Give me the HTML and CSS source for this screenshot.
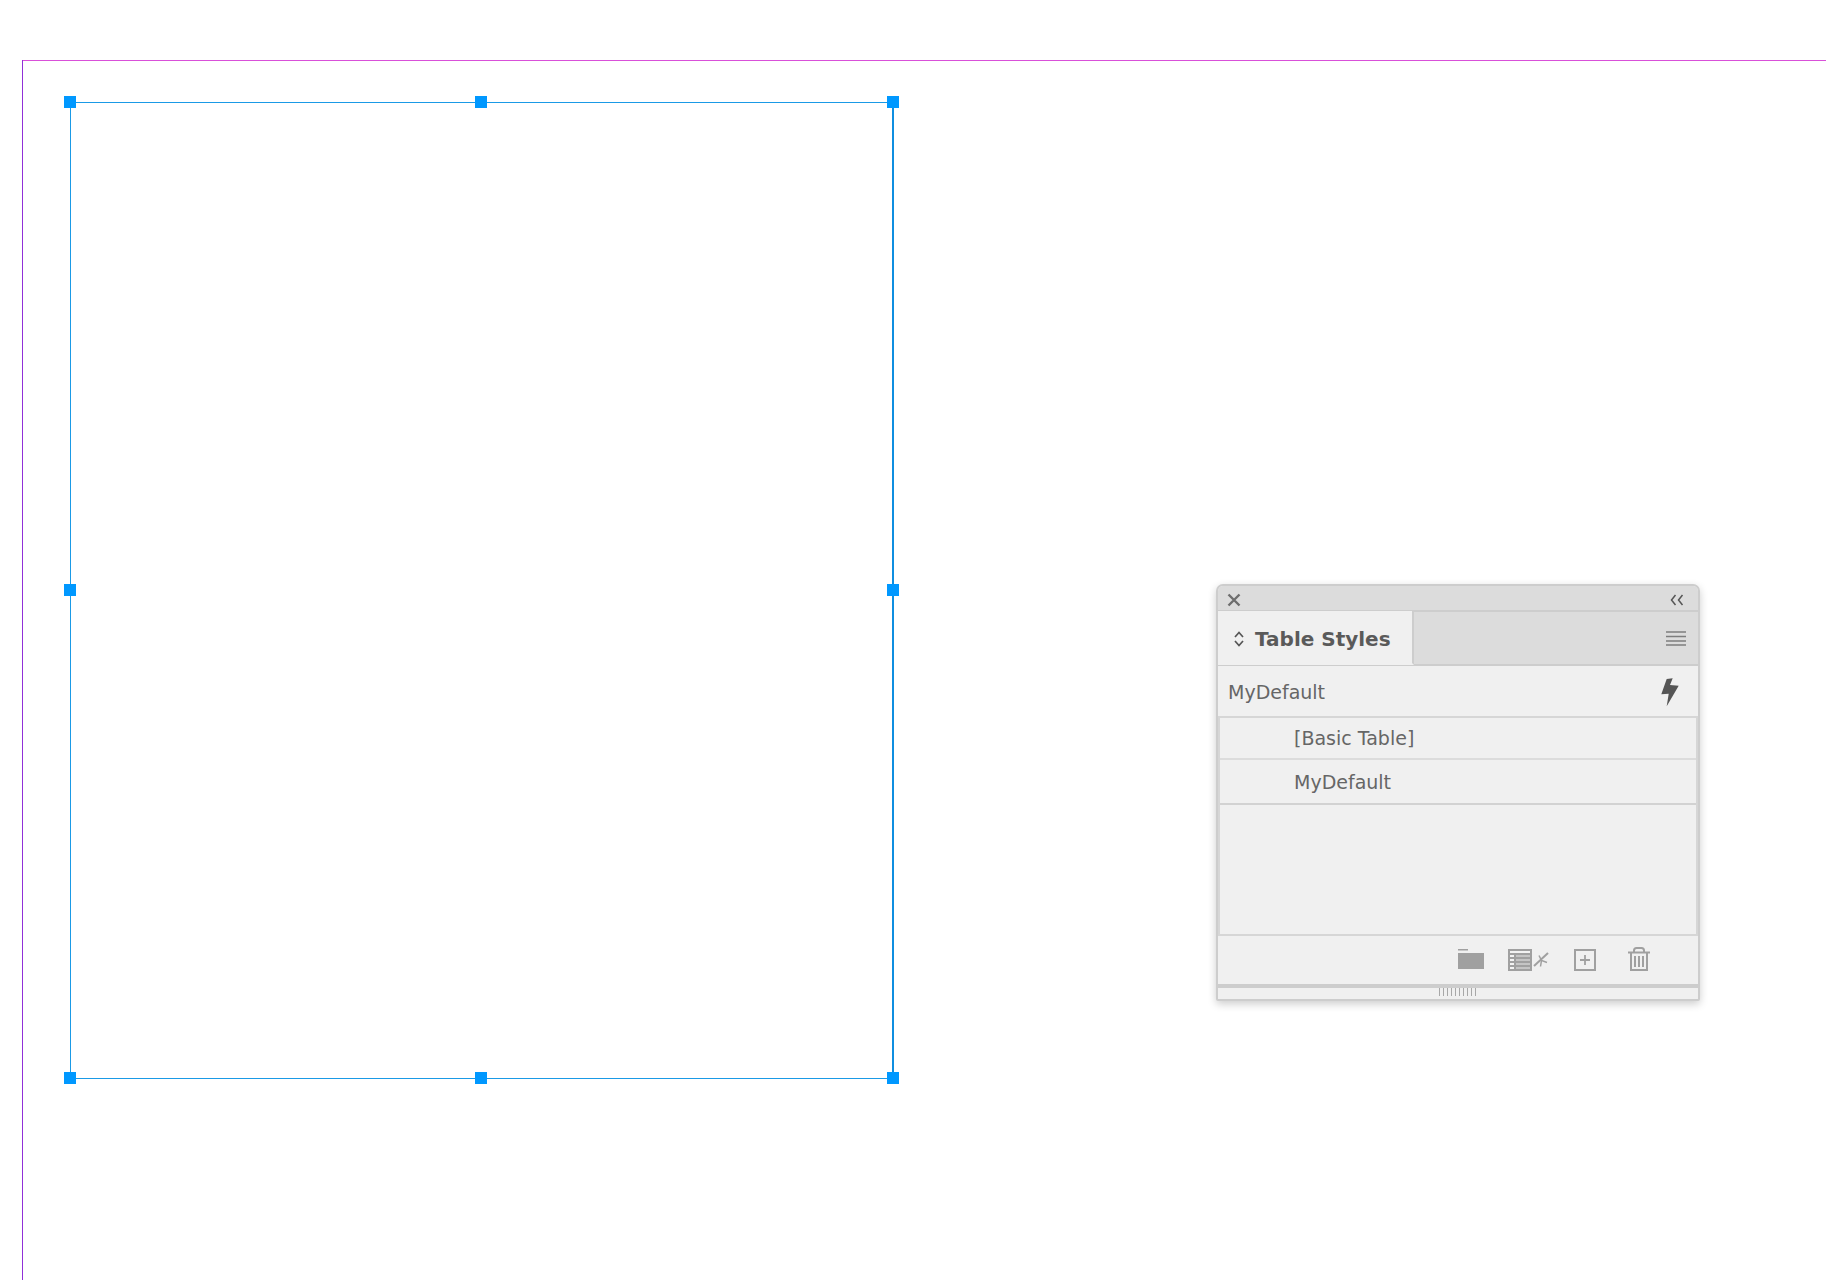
FILE: index.html
```html
<!DOCTYPE html>
<html lang="en">
<head>
<meta charset="utf-8">
<title>Table Styles</title>
<link rel="stylesheet" href="styles.css">
</head>
<body>
<main class="canvas">
  <div class="margin margin-top"></div>
  <div class="margin margin-left"></div>

  <div class="frame">
    <span class="handle h-tl"></span><span class="handle h-tc"></span><span class="handle h-tr"></span>
    <span class="handle h-ml"></span><span class="handle h-mr"></span>
    <span class="handle h-bl"></span><span class="handle h-bc"></span><span class="handle h-br"></span>
  </div>

  <section class="panel">
    <header class="titlebar">
      <svg class="icon-close" width="14" height="14" viewBox="0 0 14 14"><path d="M1.500 1.500l11 11M12.500 1.500l-11 11" fill="none" stroke="#6e6e6e" stroke-width="2.400"/></svg>
      <svg class="icon-collapse" width="14" height="12" viewBox="0 0 14 12"><path d="M5.500 1L1.500 6l4 5M12.500 1L8.500 6l4 5" fill="none" stroke="#555" stroke-width="1.500"/></svg>
    </header>
    <div class="tabbar">
      <div class="tab">
        <svg class="icon-updown" width="10" height="16" viewBox="0 0 10 16"><path d="M1 6l4-4.500L9 6M1 10l4 4.500L9 10" fill="none" stroke="#555" stroke-width="1.700"/></svg>
        <span class="tab-label">Table Styles</span>
      </div>
      <svg class="icon-menu" width="20" height="15" viewBox="0 0 20 15"><path d="M0 1h20M0 5.500h20M0 10h20M0 14h20" stroke="#7d7d7d" stroke-width="1.600"/></svg>
    </div>
    <div class="current">
      <span>MyDefault</span>
      <svg class="icon-bolt" width="18" height="29" viewBox="0 0 18 29"><path d="M5.700 1L11.700.3 9 7l8.700.7L5.700 28.300l2-12.600-7.400.6z" fill="#555"/></svg>
    </div>
    <div class="list">
      <div class="row row-first">[Basic Table]</div>
      <div class="row row-second">MyDefault</div>
    </div>
    <div class="toolbar">
      <svg class="tool tool-folder" width="26" height="20" viewBox="0 0 26 20"><path d="M0 0h10v1.500H0zM0 4h26v16H0z" fill="#a0a0a0"/></svg>
      <svg class="tool tool-table" width="41" height="22" viewBox="0 0 41 22"><path d="M0 0h24v22H0z" fill="#a0a0a0"/><path d="M2 2h20v2H2zM2 6h4v2H2zM2 10h4v2H2zM2 14h4v2H2zM2 18h4v2H2z" fill="#f2f2f2"/><path d="M8 6h14v2H8zM8 10h14v2H8zM8 14h14v2H8zM8 18h14v2H8z" fill="#c4c4c4"/><path d="M26 17L40 4" fill="none" stroke="#a0a0a0" stroke-width="2"/><path d="M31 6.500l2.500 5 5.500 2M33.500 11.500l-1 6" fill="none" stroke="#a0a0a0" stroke-width="1.500"/></svg>
      <svg class="tool tool-new" width="22" height="22" viewBox="0 0 22 22"><path d="M1 1h20v20H1z" fill="none" stroke="#a0a0a0" stroke-width="2"/><path d="M11 6v10M6 11h10" stroke="#a0a0a0" stroke-width="1.800"/></svg>
      <svg class="tool tool-trash" width="22" height="24" viewBox="0 0 22 24"><path d="M0 5.500h22M6 5V3.500Q6 1 8.500 1h5Q16 1 16 3.500V5M3 5.500V23h16V5.500M7 9v11M11 9v11M15 9v11" fill="none" stroke="#a0a0a0" stroke-width="2"/></svg>
    </div>
    <div class="grip">
      <svg width="38" height="8" viewBox="0 0 38 8"><path d="M.5 0v8M4.500 0v8M8.500 0v8M12.500 0v8M16.500 0v8M20.500 0v8M24.500 0v8M28.500 0v8M32.500 0v8M36.500 0v8" stroke="#a8a8a8" stroke-width="1"/></svg>
    </div>
  </section>
</main>
</body>
</html>
```
FILE: styles.css
```css
* { box-sizing: border-box; }
html, body { margin: 0; padding: 0; background: #fff; }
.canvas { position: relative; width: 1826px; height: 1280px; overflow: hidden; background: #fff; }

.margin { position: absolute; }
.margin-top { left: 22px; top: 60px; right: 0; height: 1px; background: #d950d9; }
.margin-left { left: 22px; top: 60px; bottom: 0; width: 1px; background: #9030d8; }

.frame {
  position: absolute; left: 70px; top: 102px; width: 824px; height: 977px;
  border: 1px solid #1a9ae6; border-right-width: 2px; border-right-color: #0f8ee0;
}
.handle { position: absolute; width: 12px; height: 12px; background: #0098ff; }
.h-tl { left: -7px; top: -7px; }
.h-tc { left: 404px; top: -7px; }
.h-tr { left: 816px; top: -7px; }
.h-ml { left: -7px; top: 481px; }
.h-mr { left: 816px; top: 481px; }
.h-bl { left: -7px; top: 969px; }
.h-bc { left: 404px; top: 969px; }
.h-br { left: 816px; top: 969px; }

.panel {
  position: absolute; left: 1216px; top: 584px; width: 484px; height: 417px;
  display: flex; flex-direction: column;
  background: #f0f0f0; border: 2px solid #cdcdcd;
  border-radius: 7px 7px 2px 2px;
  box-shadow: 0 3px 9px rgba(0, 0, 0, .2);
  font-family: "DejaVu Sans", sans-serif; color: #666;
}
.titlebar {
  flex: none; height: 26px; display: flex; align-items: center; justify-content: space-between;
  padding: 3px 14px 0 9px; background: #dcdcdc; border-bottom: 2px solid #cdcdcd;
  border-radius: 5px 5px 0 0;
}
.tabbar {
  flex: none; height: 54px; display: flex; justify-content: space-between; align-items: center;
  padding-right: 12px; background: #dcdcdc; border-bottom: 2px solid #cdcdcd;
}
.tab {
  width: 196px; height: 54px; display: flex; align-items: center; gap: 11px; padding: 4px 0 0 16px;
  background: #f0f0f0; border-right: 2px solid #cdcdcd; border-bottom: 2px solid #f0f0f0;
}
.tab-label { font-size: 20px; font-weight: 700; color: #5a5a5a; white-space: nowrap; }
.current {
  flex: none; height: 50px; display: flex; align-items: center; justify-content: space-between;
  padding: 2px 19px 0 10px; font-size: 19px;
}
.list {
  flex: none; height: 220px; display: flex; flex-direction: column;
  border: 2px solid #d6d6d6; font-size: 19px;
}
.row { display: flex; align-items: center; padding-left: 74px; border-bottom: 2px solid #dcdcdc; }
.row-first { height: 42px; }
.row-second { height: 45px; border-bottom-color: #d2d2d2; }
.toolbar { flex: none; height: 48px; position: relative; }
.tool { position: absolute; }
.tool-folder { left: 240px; top: 13px; }
.tool-table { left: 290px; top: 13px; }
.tool-new { left: 356px; top: 13px; }
.tool-trash { left: 410px; top: 11px; }
.grip {
  flex: 1; display: flex; justify-content: center; align-items: flex-start;
  border-top: 4px solid #cdcdcd; padding-right: 1px;
}
.grip svg { display: block; }
```
